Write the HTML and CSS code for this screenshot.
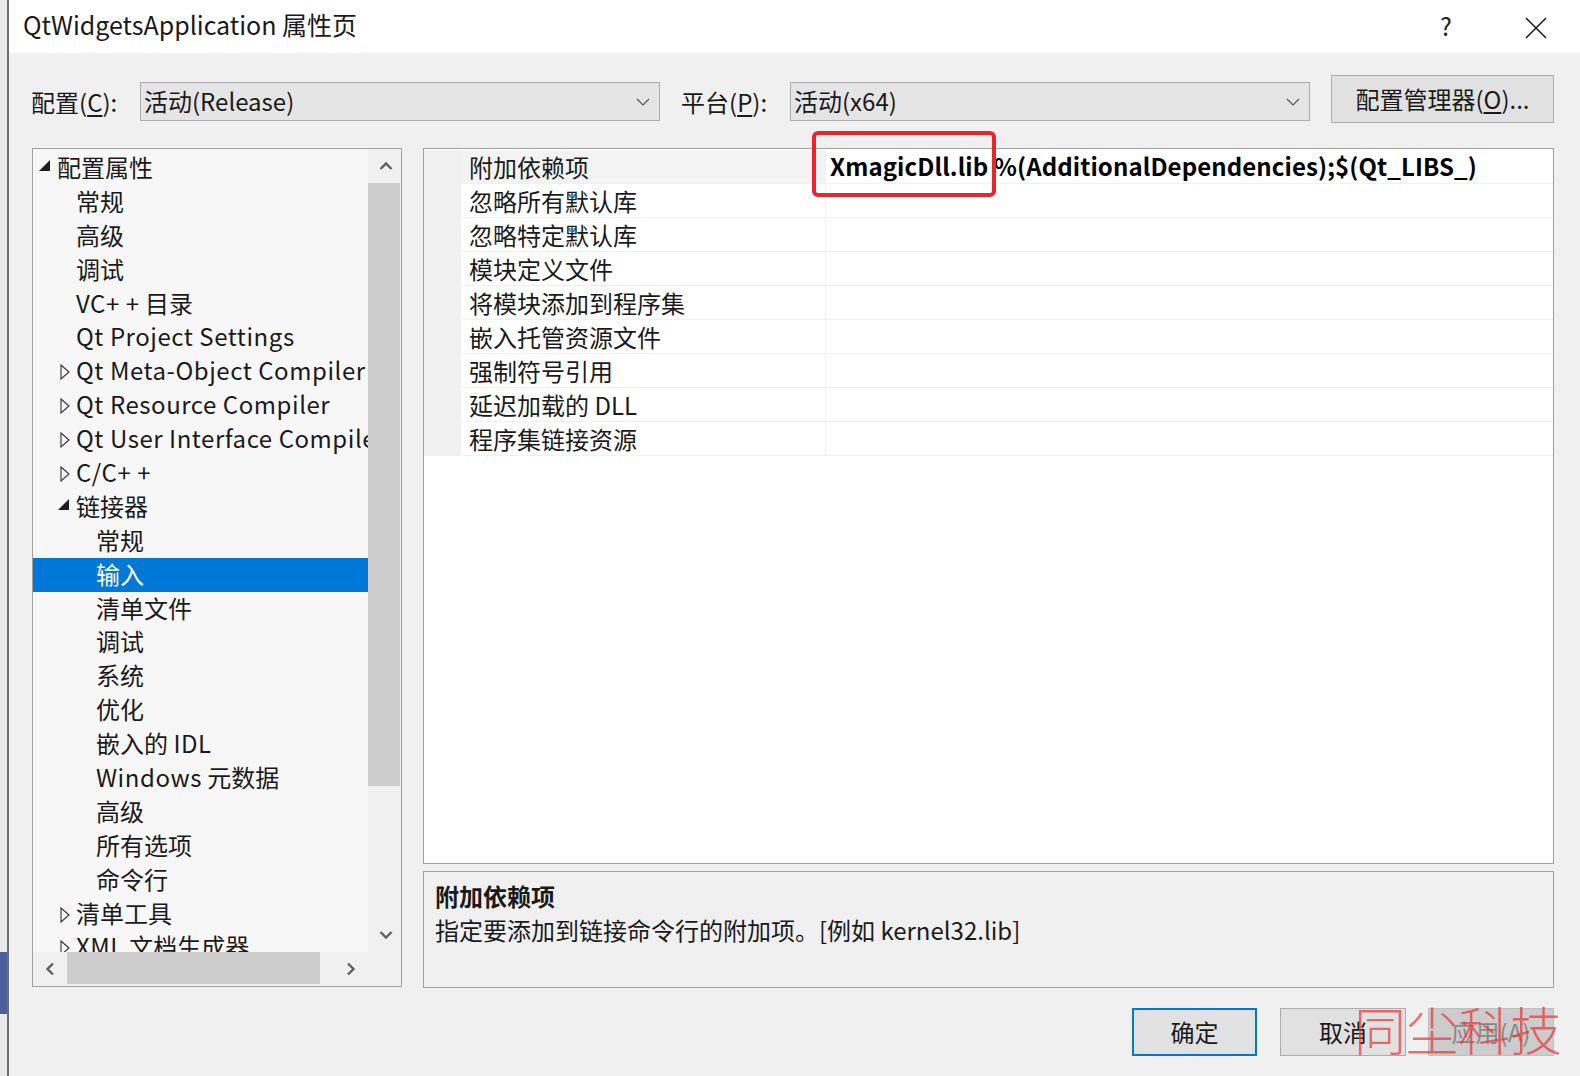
FILE: index.html
```html
<!DOCTYPE html>
<html lang="zh-CN">
<head>
<meta charset="utf-8">
<title>QtWidgetsApplication 属性页</title>
<link rel="stylesheet" href="styles.css">
</head>
<body>
<div class="screen">
  <div class="behind"><div class="behind-blue"></div></div>
  <div class="dialog">
    <div class="titlebar">
      <span class="title">QtWidgetsApplication 属性页</span>
      <span class="help">?</span>
      <span class="close"><svg width="22" height="22" viewBox="0 0 22 22"><path d="M1 1 L21 21 M21 1 L1 21" stroke="#1e1e1e" stroke-width="1.6" fill="none"/></svg></span>
    </div>
    <div class="content">
      <div class="toprow">
        <span class="lbl lbl-cfg">配置(<u>C</u>):</span>
        <div class="combo"><span>活动(Release)</span><svg class="chev" width="14" height="8" viewBox="0 0 14 8"><path d="M1 1 L7 7 L13 1" stroke="#555" stroke-width="1.2" fill="none"/></svg></div>
        <span class="lbl lbl-plat">平台(<u>P</u>):</span>
        <div class="combo"><span>活动(x64)</span><svg class="chev" width="14" height="8" viewBox="0 0 14 8"><path d="M1 1 L7 7 L13 1" stroke="#555" stroke-width="1.2" fill="none"/></svg></div>
        <button class="btn btn-mgr">配置管理器(<u>O</u>)...</button>
      </div>
      <div class="main">
        <div class="tree">
          <div class="tree-body">
            <div class="row l0"><span class="exp"><svg width="11" height="11" viewBox="0 0 11 11"><path d="M11 0 L11 11 L0 11 Z" fill="#1e1e1e"/></svg></span><span>配置属性</span></div>
            <div class="row l1"><span class="exp"></span><span>常规</span></div>
            <div class="row l1"><span class="exp"></span><span>高级</span></div>
            <div class="row l1"><span class="exp"></span><span>调试</span></div>
            <div class="row l1"><span class="exp"></span><span><span class="lat">VC+ +</span> 目录</span></div>
            <div class="row l1"><span class="exp"></span><span class="lat">Qt Project Settings</span></div>
            <div class="row l1"><span class="exp col"><svg width="10" height="16" viewBox="0 0 10 16"><path d="M1 1 L9 8 L1 15 Z" stroke="#333" stroke-width="1.1" fill="none"/></svg></span><span class="lat">Qt Meta-Object Compiler</span></div>
            <div class="row l1"><span class="exp col"><svg width="10" height="16" viewBox="0 0 10 16"><path d="M1 1 L9 8 L1 15 Z" stroke="#333" stroke-width="1.1" fill="none"/></svg></span><span class="lat">Qt Resource Compiler</span></div>
            <div class="row l1"><span class="exp col"><svg width="10" height="16" viewBox="0 0 10 16"><path d="M1 1 L9 8 L1 15 Z" stroke="#333" stroke-width="1.1" fill="none"/></svg></span><span class="lat">Qt User Interface Compiler</span></div>
            <div class="row l1"><span class="exp col"><svg width="10" height="16" viewBox="0 0 10 16"><path d="M1 1 L9 8 L1 15 Z" stroke="#333" stroke-width="1.1" fill="none"/></svg></span><span class="lat">C/C+ +</span></div>
            <div class="row l1"><span class="exp"><svg width="11" height="11" viewBox="0 0 11 11"><path d="M11 0 L11 11 L0 11 Z" fill="#1e1e1e"/></svg></span><span>链接器</span></div>
            <div class="row l2"><span class="exp"></span><span>常规</span></div>
            <div class="row l2 sel"><span class="exp"></span><span>输入</span></div>
            <div class="row l2"><span class="exp"></span><span>清单文件</span></div>
            <div class="row l2"><span class="exp"></span><span>调试</span></div>
            <div class="row l2"><span class="exp"></span><span>系统</span></div>
            <div class="row l2"><span class="exp"></span><span>优化</span></div>
            <div class="row l2"><span class="exp"></span><span>嵌入的 <span class="lat">IDL</span></span></div>
            <div class="row l2"><span class="exp"></span><span><span class="lat">Windows</span> 元数据</span></div>
            <div class="row l2"><span class="exp"></span><span>高级</span></div>
            <div class="row l2"><span class="exp"></span><span>所有选项</span></div>
            <div class="row l2"><span class="exp"></span><span>命令行</span></div>
            <div class="row l1"><span class="exp col"><svg width="10" height="16" viewBox="0 0 10 16"><path d="M1 1 L9 8 L1 15 Z" stroke="#333" stroke-width="1.1" fill="none"/></svg></span><span>清单工具</span></div>
            <div class="row l1"><span class="exp col"><svg width="10" height="16" viewBox="0 0 10 16"><path d="M1 1 L9 8 L1 15 Z" stroke="#333" stroke-width="1.1" fill="none"/></svg></span><span><span class="lat">XML</span> 文档生成器</span></div>
          </div>
          <div class="vscroll">
            <div class="sb-arrow"><svg width="14" height="10" viewBox="0 0 14 10"><path d="M1.5 8 L7 2.5 L12.5 8" stroke="#606060" stroke-width="2.4" fill="none"/></svg></div>
            <div class="vthumb"></div>
            <div class="vtrack"></div>
            <div class="sb-arrow"><svg width="14" height="10" viewBox="0 0 14 10"><path d="M1.5 2 L7 7.5 L12.5 2" stroke="#606060" stroke-width="2.4" fill="none"/></svg></div>
          </div>
          <div class="hscroll">
            <div class="sb-harrow"><svg width="10" height="14" viewBox="0 0 10 14"><path d="M8 1.5 L2.5 7 L8 12.5" stroke="#606060" stroke-width="2.4" fill="none"/></svg></div>
            <div class="hthumb"></div>
            <div class="htrack"></div>
            <div class="sb-harrow"><svg width="10" height="14" viewBox="0 0 10 14"><path d="M2 1.5 L7.5 7 L2 12.5" stroke="#606060" stroke-width="2.4" fill="none"/></svg></div>
          </div>
          <div class="corner"></div>
        </div>
        <div class="right">
          <div class="grid">
            <div class="grow first"><div class="gut"></div><div class="gname">附加依赖项</div><div class="gval"><b>XmagicDll.lib %(AdditionalDependencies);$(Qt_LIBS_)</b></div></div>
            <div class="grow"><div class="gut"></div><div class="gname">忽略所有默认库</div><div class="gval"></div></div>
            <div class="grow"><div class="gut"></div><div class="gname">忽略特定默认库</div><div class="gval"></div></div>
            <div class="grow"><div class="gut"></div><div class="gname">模块定义文件</div><div class="gval"></div></div>
            <div class="grow"><div class="gut"></div><div class="gname">将模块添加到程序集</div><div class="gval"></div></div>
            <div class="grow"><div class="gut"></div><div class="gname">嵌入托管资源文件</div><div class="gval"></div></div>
            <div class="grow"><div class="gut"></div><div class="gname">强制符号引用</div><div class="gval"></div></div>
            <div class="grow"><div class="gut"></div><div class="gname">延迟加载的 DLL</div><div class="gval"></div></div>
            <div class="grow"><div class="gut"></div><div class="gname">程序集链接资源</div><div class="gval"></div></div>
            <div class="redbox"></div>
          </div>
          <div class="desc">
            <div class="desc-title">附加依赖项</div>
            <div class="desc-text">指定要添加到链接命令行的附加项。[例如 kernel32.lib]</div>
          </div>
        </div>
      </div>
      <div class="buttons">
        <button class="btn btn-ok">确定</button>
        <button class="btn btn-cancel">取消</button>
        <button class="btn btn-apply">应用(A)</button>
      </div>
    </div>
    <div class="watermark">同尘科技</div>
  </div>
</div>
</body>
</html>
```

FILE: styles.css
```css
* { box-sizing: border-box; }
html, body { margin: 0; padding: 0; }
body {
  width: 1580px;
  height: 1076px;
  overflow: hidden;
  font-family: "Noto Sans CJK SC", "Noto Sans", sans-serif;
  color: #1a1a1a;
  background: #f0f0f0;
}
.screen { display: flex; height: 1076px; }

.behind {
  width: 9px;
  flex: none;
  background: #e9e9e9;
  border-right: 2px solid #6e6e6e;
  display: flex;
  flex-direction: column;
  justify-content: flex-end;
  padding-bottom: 62px;
}
.behind-blue { height: 62px; background: #4a5f9c; }

.dialog {
  flex: 1;
  display: flex;
  flex-direction: column;
  position: relative;
  background: #f0f0f0;
}

.titlebar {
  height: 53px;
  flex: none;
  background: #fff;
  display: flex;
  align-items: center;
  padding-left: 14px;
  padding-right: 22px;
}
.title { font-size: 25px; flex: 1; line-height: 1; margin-top: -4px; }
.help { width: 44px; text-align: center; font-size: 25px; color: #222; margin-right: 46px; margin-top: -4px; }
.close { width: 44px; display: flex; justify-content: center; margin-top: 2px; }

.content {
  flex: 1;
  display: flex;
  flex-direction: column;
  padding: 22px 26px 0 23px;
}

.toprow { height: 48px; display: flex; align-items: flex-start; font-size: 24px; }
.lbl { height: 39px; line-height: 39px; margin-top: 7px; white-space: nowrap; }
.lbl u { text-underline-offset: 3px; }
.lbl-cfg { width: 109px; margin-left: -1px; padding-left: 0; }
.lbl-plat { width: 130px; padding-left: 21px; }
.combo {
  width: 520px;
  height: 39px;
  margin-top: 7px;
  background: #e5e5e5;
  border: 1px solid #acacac;
  display: flex;
  align-items: center;
  justify-content: space-between;
  padding-left: 3px;
  padding-right: 9px;
  line-height: 1;
}
.combo span { margin-top: -1px; }
.chev { margin-top: 1px; }

.btn {
  font-family: "Noto Sans CJK SC", "Noto Sans", sans-serif;
  font-size: 24px;
  color: #1a1a1a;
  background: #e1e1e1;
  border: 1px solid #adadad;
  padding: 0;
  line-height: 1;
}
.btn u { text-underline-offset: 3px; }
.btn-mgr { width: 223px; height: 48px; margin-left: 21px; }

.main { display: flex; margin-top: 25px; height: 840px; }

.tree {
  width: 370px;
  height: 839px;
  flex: none;
  border: 1px solid #a0a0a0;
  display: grid;
  grid-template-columns: 335px 33px;
  grid-template-rows: 1fr 34px;
  background: #f0f0f0;
}
.tree-body {
  background: #f7f7f7;
  overflow: hidden;
  padding-top: 2px;
  font-size: 24px;
}
.row {
  height: 33.9px;
  display: flex;
  align-items: center;
  white-space: nowrap;
  line-height: 1;
}
.row > span:last-child { margin-top: -2px; }
.lat { letter-spacing: 0.55px; }
.row.l0 { padding-left: 4px; }
.row.l1 { padding-left: 23px; }
.row.l2 { padding-left: 43px; }
.exp { width: 20px; flex: none; display: flex; align-items: center; padding-left: 2px; margin-top: -4px; }
.exp.col { padding-left: 4px; margin-top: 2px; }
.row.sel { background: #0078d7; color: #fff; }

.vscroll {
  grid-row: 1;
  grid-column: 2;
  display: flex;
  flex-direction: column;
  background: #f0f0f0;
}
.sb-arrow { height: 34px; flex: none; display: flex; align-items: center; justify-content: center; padding-left: 3px; }
.vthumb { height: 603px; background: #cdcdcd; margin-right: 1px; flex: none; }
.vtrack { flex: 1; }

.hscroll {
  grid-row: 2;
  grid-column: 1;
  display: flex;
  background: #f0f0f0;
}
.sb-harrow { width: 34px; flex: none; display: flex; align-items: center; justify-content: center; }
.hthumb { width: 253px; background: #cdcdcd; margin: 0 0 2px 0; flex: none; }
.htrack { flex: 1; }
.corner { grid-row: 2; grid-column: 2; background: #f0f0f0; }

.right { flex: 1; margin-left: 21px; display: flex; flex-direction: column; }

.grid {
  height: 716px;
  flex: none;
  background: #fff;
  border: 1px solid #a0a0a0;
  padding-top: 1px;
  position: relative;
  font-size: 24px;
}
.grow { display: flex; height: 34px; line-height: 1; }
.gut { width: 37px; flex: none; background: #f0f0f0; }
.gname {
  width: 365px;
  flex: none;
  padding-left: 8px;
  display: flex;
  align-items: center;
  border-bottom: 1px solid #f0f0f0;
  border-right: 1px solid #f0f0f0;
  white-space: nowrap;
}
.grow.first .gname { background: #f3f3f3; }
.gval {
  flex: 1;
  padding-left: 4px;
  display: flex;
  align-items: center;
  border-bottom: 1px solid #f0f0f0;
  white-space: nowrap;
  color: #000;
}
.gval b { font-weight: 700; margin-top: -2px; letter-spacing: 0.1px; }

.redbox {
  position: absolute;
  left: 388px;
  top: -18px;
  width: 184px;
  height: 66px;
  border: 4px solid #e8262b;
  border-radius: 6px;
}

.desc {
  margin-top: 7px;
  flex: 1;
  border: 1px solid #a0a0a0;
  background: #f0f0f0;
  padding: 6px 0 0 11px;
  font-size: 24px;
}
.desc-title, .desc-text { height: 34px; display: flex; align-items: center; }
.desc-title { font-weight: 700; }

.buttons {
  display: flex;
  justify-content: flex-end;
  gap: 22px;
  margin-top: 20px;
}
.btn-ok { width: 125px; height: 48px; border: 2px solid #0078d7; margin-right: 1px; }
.btn-cancel { width: 126px; height: 48px; }
.btn-apply { width: 126px; height: 48px; background: #cccccc; border-color: #bfbfbf; color: #8a8a8a; }

.watermark {
  position: absolute;
  left: 1345px;
  top: 1003px;
  font-size: 52px;
  font-weight: 300;
  letter-spacing: 0px;
  color: rgba(232, 58, 58, 0.72);
  line-height: 1;
  pointer-events: none;
}
```
